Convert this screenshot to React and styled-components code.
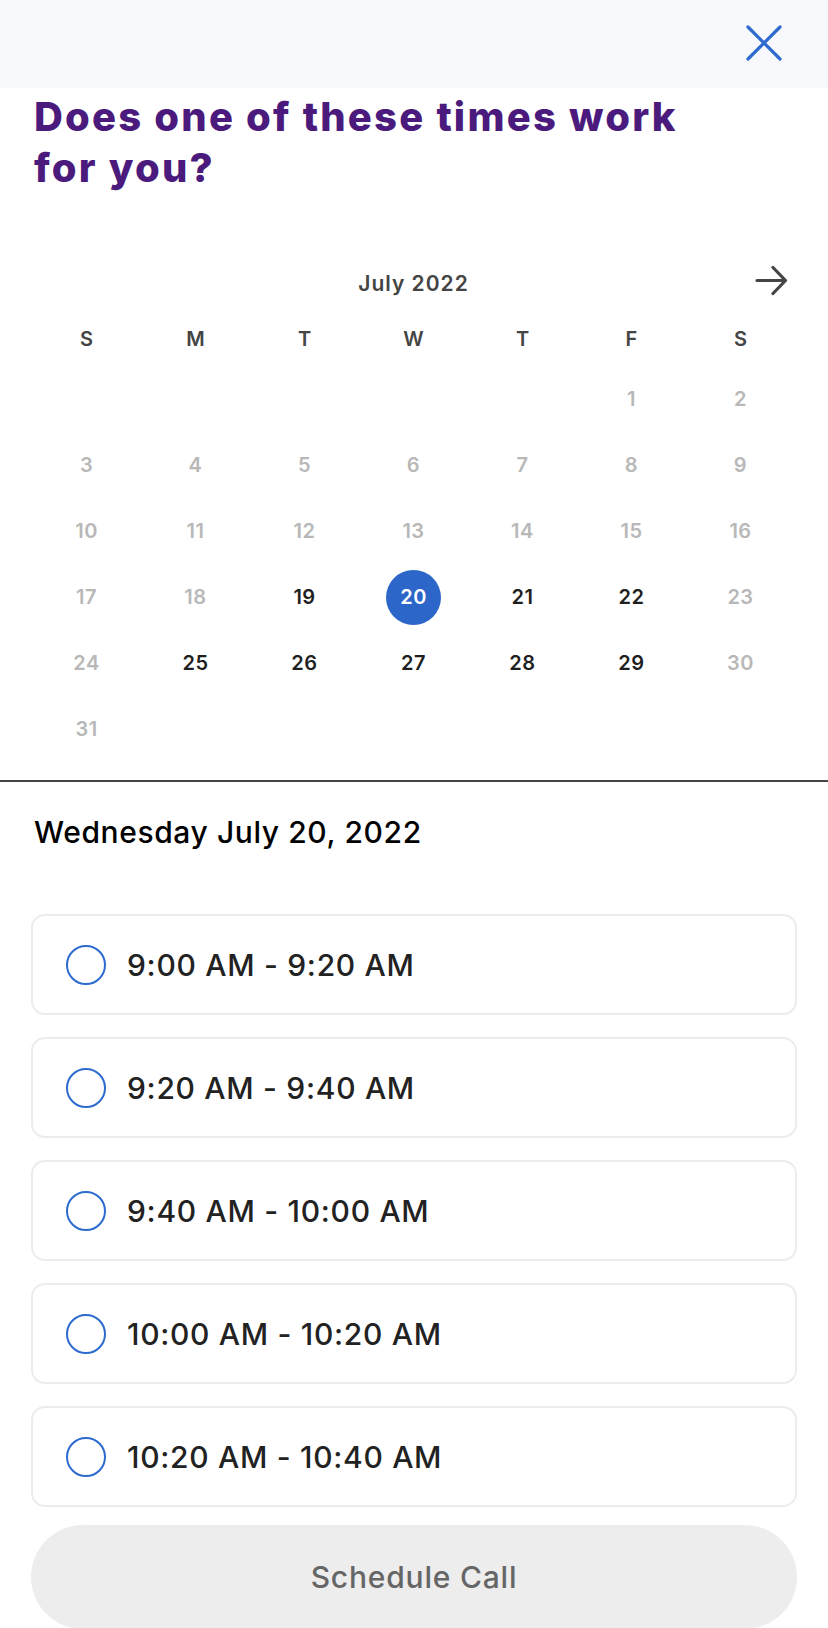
import React from 'react';
import styled, { createGlobalStyle } from 'styled-components';

const Global = createGlobalStyle`
  html, body { margin: 0; padding: 0; background: #fff; }
  body { font-family: Inter, "Noto Sans", sans-serif; -webkit-font-smoothing: antialiased; }
  * { box-sizing: border-box; }
`;

const Page = styled.div`
  width: 828px;
  min-height: 1628px;
  background: #fff;
  overflow: hidden;
`;

const TopBar = styled.header`
  height: 88px;
  background: #f8f9fd;
  display: flex;
  align-items: center;
  justify-content: flex-end;
  padding: 0 46px 3px 0;
`;

const IconButton = styled.button`
  border: 0;
  background: none;
  padding: 0;
  display: flex;
  cursor: pointer;
`;

const Title = styled.h1`
  margin: 3px 0 0;
  padding: 0 34px;
  max-width: 724px;
  font-size: 40px;
  line-height: 51px;
  font-weight: 800;
  color: #4b1a7d;
  letter-spacing: 2.2px;
`;

const Calendar = styled.section`
  margin-top: 63px;
  padding: 0 33px 0 32px;
`;

const MonthHeader = styled.div`
  height: 54px;
  display: grid;
  grid-template-columns: 1fr auto 1fr;
  align-items: center;
`;

const MonthLabel = styled.div`
  grid-column: 2;
  font-size: 21px;
  font-weight: 600;
  letter-spacing: 1px;
  color: #444;
`;

const NextButton = styled(IconButton)`
  grid-column: 3;
  justify-self: end;
  margin-right: 7px;
  margin-top: -5px;
`;

const Grid = styled.div`
  display: grid;
  grid-template-columns: repeat(7, 1fr);
  grid-auto-rows: ${p => p.$rowHeight}px;
  align-items: center;
  justify-items: center;
`;

const Weekday = styled.div`
  font-size: 20px;
  font-weight: 600;
  color: #444;
  margin-top: 2px;
`;

const Day = styled.div`
  width: 55px;
  height: 55px;
  border-radius: 50%;
  display: flex;
  align-items: center;
  justify-content: center;
  font-size: 20px;
  font-weight: 600;
  letter-spacing: 0.5px;
  color: ${p => (p.$selected ? '#fff' : p.$available ? '#1f1f1f' : '#b8b8b8')};
  background: ${p => (p.$selected ? '#2b66c8' : 'transparent')};
`;

const Divider = styled.hr`
  margin: 18px 0 0;
  border: 0;
  height: 2px;
  background: #444;
`;

const DateHeading = styled.h2`
  margin: 33px 0 0;
  padding: 0 34px;
  font-size: 30px;
  line-height: 34px;
  font-weight: 500;
  letter-spacing: 0.6px;
  color: #000;
`;

const SlotList = styled.div`
  margin-top: 65px;
  padding: 0 31px;
  display: flex;
  flex-direction: column;
  gap: 22px;
`;

const Slot = styled.label`
  height: 101px;
  border: 2px solid #ececec;
  border-radius: 14px;
  display: flex;
  align-items: center;
  gap: 21px;
  padding: 0 33px;
  cursor: pointer;
`;

const Radio = styled.span`
  width: 40px;
  height: 40px;
  border-radius: 50%;
  border: 2px solid #2d6bcf;
  flex-shrink: 0;
`;

const SlotText = styled.span`
  font-size: 30px;
  font-weight: 500;
  letter-spacing: 0.7px;
  color: #222;
`;

const ScheduleButton = styled.button`
  display: block;
  margin: 18px 31px 0;
  width: calc(100% - 62px);
  height: 104px;
  border: 0;
  border-radius: 52px;
  background: #ededed;
  color: #666;
  font-family: inherit;
  font-size: 30px;
  font-weight: 500;
  letter-spacing: 0.8px;
`;

const weekdays = ['S', 'M', 'T', 'W', 'T', 'F', 'S'];
const available = new Set([19, 21, 22, 25, 26, 27, 28, 29]);
const selectedDay = 20;
const slots = [
  '9:00 AM - 9:20 AM',
  '9:20 AM - 9:40 AM',
  '9:40 AM - 10:00 AM',
  '10:00 AM - 10:20 AM',
  '10:20 AM - 10:40 AM',
];

export default function App() {
  const cells = [];
  for (let i = 0; i < 5; i++) cells.push(<span key={'e' + i} />);
  for (let d = 1; d <= 31; d++) {
    cells.push(
      <Day key={d} $selected={d === selectedDay} $available={available.has(d)}>
        {d}
      </Day>
    );
  }

  return (
    <Page>
      <Global />
      <TopBar>
        <IconButton aria-label="Close">
          <svg width="36" height="36" viewBox="0 0 36 36">
            <path d="M2 2 L34 34 M34 2 L2 34" stroke="#2d6bcf" strokeWidth="3.2" strokeLinecap="round" fill="none" />
          </svg>
        </IconButton>
      </TopBar>
      <Title>Does one of these times work for you?</Title>
      <Calendar>
        <MonthHeader>
          <MonthLabel>July 2022</MonthLabel>
          <NextButton aria-label="Next month">
            <svg width="33" height="31" viewBox="0 0 33 31">
              <path d="M2 15.5 H30 M18 2.5 L30.5 15.5 L18 28.5" stroke="#444" strokeWidth="3.2" strokeLinecap="round" strokeLinejoin="round" fill="none" />
            </svg>
          </NextButton>
        </MonthHeader>
        <Grid $rowHeight={56}>
          {weekdays.map((w, i) => (
            <Weekday key={i}>{w}</Weekday>
          ))}
        </Grid>
        <Grid $rowHeight={66}>{cells}</Grid>
      </Calendar>
      <Divider />
      <DateHeading>Wednesday July 20, 2022</DateHeading>
      <SlotList>
        {slots.map(s => (
          <Slot key={s}>
            <Radio />
            <SlotText>{s}</SlotText>
          </Slot>
        ))}
      </SlotList>
      <ScheduleButton>Schedule Call</ScheduleButton>
    </Page>
  );
}
